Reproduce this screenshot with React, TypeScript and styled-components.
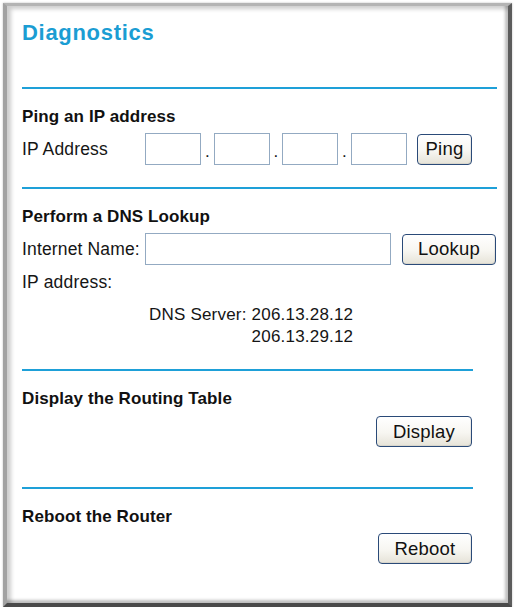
import React from "react";
import styled, { createGlobalStyle } from "styled-components";

const Global = createGlobalStyle`
  html, body { margin: 0; padding: 0; background: #ffffff; }
  body { font-family: "Liberation Sans", Arial, sans-serif; color: #151515; }
`;

const Frame = styled.div`
  box-sizing: border-box;
  margin: 3px 3px 0 3px;
  height: 604px;
  border-style: solid;
  border-width: 3px 4px 4px 4px;
  border-color: #b4b4b4 #5c5c5c #4a4a4a #a2a2a2;
  box-shadow: inset 4px 3px 4px rgba(0, 0, 0, 0.2),
    inset -3px -3px 3px rgba(0, 0, 0, 0.25), 0 0 2px rgba(0, 0, 0, 0.25);
  padding: 14px 0 0 15px;
  background: #ffffff;
`;

const Title = styled.h1`
  margin: 0;
  font-size: 22px;
  line-height: 26px;
  font-weight: bold;
  letter-spacing: 0.7px;
  color: #1b9dd3;
`;

const Section = styled.section<{ $width: number }>`
  width: ${(p) => p.$width}px;
`;

const Rule = styled.div<{ $top: number }>`
  height: 2px;
  margin-top: ${(p) => p.$top}px;
  background: #1ea0d8;
`;

const Heading = styled.h2`
  margin: 18px 0 0 0;
  font-size: 17px;
  line-height: 20px;
  font-weight: bold;
  letter-spacing: 0.1px;
  color: #111;
`;

const Row = styled.div<{ $top: number }>`
  display: flex;
  align-items: center;
  margin-top: ${(p) => p.$top}px;
  height: 32px;
`;

const Label = styled.span`
  width: 123px;
  flex: none;
  font-size: 17.5px;
  line-height: 20px;
  letter-spacing: 0.15px;
`;

const TextBox = styled.input<{ $w: number }>`
  box-sizing: border-box;
  width: ${(p) => p.$w}px;
  height: 32px;
  flex: none;
  margin: 0;
  padding: 0 4px;
  border: 1px solid #93aac2;
  background: #fff;
  font-family: inherit;
  font-size: 16px;
  outline: none;
`;

const Dot = styled.span`
  width: 12.5px;
  flex: none;
  text-align: center;
  align-self: flex-end;
  font-size: 17px;
  line-height: 20px;
  padding-bottom: 3px;
`;

const Button = styled.button<{ $w: number; $gap?: number }>`
  box-sizing: border-box;
  flex: none;
  width: ${(p) => p.$w}px;
  height: 31px;
  margin: 0 0 0 ${(p) => p.$gap ?? 0}px;
  padding: 0;
  border: 1px solid #2a4a78;
  border-radius: 4px;
  background: linear-gradient(#ffffff 0%, #f7f6f1 55%, #e6e3d8 100%);
  box-shadow: inset -1px -1px 0 rgba(0, 0, 0, 0.06);
  font-family: "Liberation Sans", Arial, sans-serif;
  font-size: 18.5px;
  letter-spacing: 0.2px;
  color: #111;
`;

const Line = styled.div<{ $top: number }>`
  margin-top: ${(p) => p.$top}px;
  font-size: 17.5px;
  line-height: 20px;
  letter-spacing: 0.2px;
`;

const ServerTable = styled.div`
  display: grid;
  grid-template-columns: auto auto;
  justify-content: start;
  column-gap: 5px;
  margin-top: 12px;
  padding-left: 127px;
  font-size: 17px;
  line-height: 22px;
  letter-spacing: 0.2px;
`;

const Cell = styled.span<{ $right?: boolean }>`
  text-align: ${(p) => (p.$right ? "right" : "left")};
`;

const ButtonBar = styled.div<{ $top: number }>`
  display: flex;
  justify-content: flex-end;
  margin-top: ${(p) => p.$top}px;
  padding-right: 1px;
`;

export default function App() {
  return (
    <>
      <Global />
      <Frame>
        <Title>Diagnostics</Title>

        <Section $width={475}>
          <Rule $top={41} />
          <Heading>Ping an IP address</Heading>
          <Row $top={6}>
            <Label>IP Address</Label>
            <TextBox $w={56} />
            <Dot>.</Dot>
            <TextBox $w={56} />
            <Dot>.</Dot>
            <TextBox $w={56} />
            <Dot>.</Dot>
            <TextBox $w={56} />
            <Button $w={55} $gap={10.5}>Ping</Button>
          </Row>
        </Section>

        <Section $width={475}>
          <Rule $top={22} />
          <Heading>Perform a DNS Lookup</Heading>
          <Row $top={6}>
            <Label>Internet Name:</Label>
            <TextBox $w={246} />
            <Button $w={94} $gap={11}>Lookup</Button>
          </Row>
          <Line $top={7}>IP address:</Line>
          <ServerTable>
            <Cell>DNS Server:</Cell>
            <Cell $right>206.13.28.12</Cell>
            <Cell />
            <Cell $right>206.13.29.12</Cell>
          </ServerTable>
        </Section>

        <Section $width={451}>
          <Rule $top={21} />
          <Heading>Display the Routing Table</Heading>
          <ButtonBar $top={7}>
            <Button $w={96}>Display</Button>
          </ButtonBar>
        </Section>

        <Section $width={451}>
          <Rule $top={40} />
          <Heading>Reboot the Router</Heading>
          <ButtonBar $top={6}>
            <Button $w={94}>Reboot</Button>
          </ButtonBar>
        </Section>
      </Frame>
    </>
  );
}
